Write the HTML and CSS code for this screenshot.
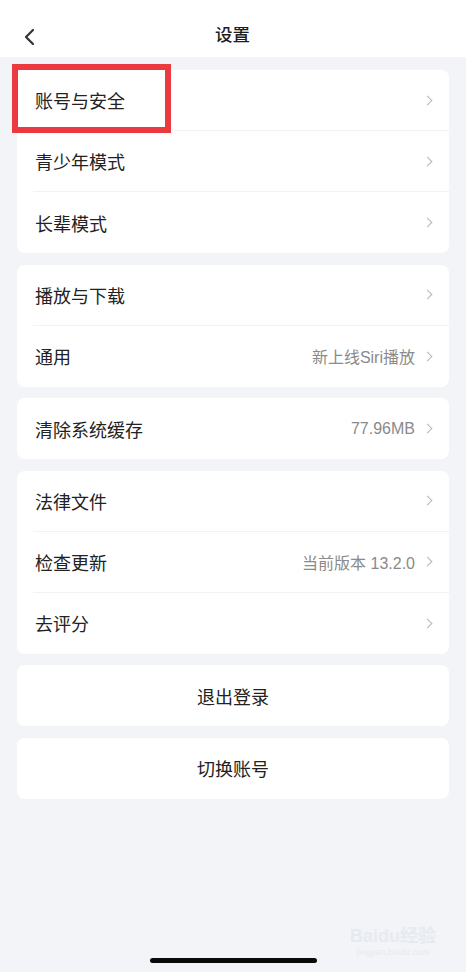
FILE: index.html
```html
<!DOCTYPE html>
<html lang="zh">
<head>
<meta charset="utf-8">
<title>设置</title>
<link rel="stylesheet" href="styles.css">
</head>
<body>
<div class="app">
  <header class="header">
    <svg class="back" width="12" height="18" viewBox="0 0 12 18"><path d="M10 2 L3 9 L10 16" fill="none" stroke="#333" stroke-width="2.2" stroke-linecap="round" stroke-linejoin="round"/></svg>
    <h1 class="title">设置</h1>
  </header>
  <main class="content">
    <section class="card">
      <div class="highlight"></div>
      <div class="row"><span class="label">账号与安全</span><span class="right"><i class="chev"></i></span></div>
      <div class="row"><span class="label">青少年模式</span><span class="right"><i class="chev"></i></span></div>
      <div class="row"><span class="label">长辈模式</span><span class="right"><i class="chev"></i></span></div>
    </section>
    <section class="card">
      <div class="row"><span class="label">播放与下载</span><span class="right"><i class="chev"></i></span></div>
      <div class="row"><span class="label">通用</span><span class="right"><span class="value">新上线Siri播放</span><i class="chev"></i></span></div>
    </section>
    <section class="card">
      <div class="row"><span class="label">清除系统缓存</span><span class="right"><span class="value">77.96MB</span><i class="chev"></i></span></div>
    </section>
    <section class="card">
      <div class="row"><span class="label">法律文件</span><span class="right"><i class="chev"></i></span></div>
      <div class="row"><span class="label">检查更新</span><span class="right"><span class="value">当前版本 13.2.0</span><i class="chev"></i></span></div>
      <div class="row"><span class="label">去评分</span><span class="right"><i class="chev"></i></span></div>
    </section>
    <button class="card btn">退出登录</button>
    <button class="card btn">切换账号</button>
  </main>
  <div class="watermark"><span class="wm-big">Bai<b>du</b>经验</span><span class="wm-small">jingyan.baidu.com</span></div>
  <div class="home"></div>
</div>
</body>
</html>
```
FILE: styles.css
```css
* { box-sizing: border-box; }
html, body { margin: 0; padding: 0; background: #fff; }
body {
  font-family: "Liberation Sans", "Noto Sans CJK SC", sans-serif;
  color: #222;
}
.app {
  position: relative;
  width: 466px;
  height: 972px;
  background: #f2f4f8;
  overflow: hidden;
}
.header {
  height: 57px;
  background: #fff;
  display: flex;
  align-items: center;
  justify-content: center;
  position: relative;
  padding-top: 13px;
}
.back {
  position: absolute;
  left: 23px;
  top: 28px;
}
.title {
  margin: 0;
  font-size: 17.5px;
  font-weight: 500;
  color: #1e1e1e;
  line-height: 22px;
  padding-right: 1px;
}
.content {
  padding: 13px 17px 0;
  display: flex;
  flex-direction: column;
  gap: 11.5px;
}
.card {
  position: relative;
  background: #fff;
  border-radius: 8px;
  padding-left: 16px;
}
.row {
  height: 61px;
  display: flex;
  align-items: center;
  justify-content: space-between;
  padding-right: 16px;
  padding-left: 2px;
  border-bottom: 1px solid #f1f2f4;
}
.row:last-child { border-bottom: none; }
.label {
  font-size: 18px;
  color: #222;
}
.right {
  display: flex;
  align-items: center;
  gap: 9px;
}
.value {
  font-size: 16px;
  color: #8a8a8a;
}
.chev {
  display: block;
  width: 7px;
  height: 7px;
  border-top: 1.2px solid #b5b5b5;
  border-right: 1.2px solid #b5b5b5;
  transform: rotate(45deg);
  margin-right: 2px;
}
.btn {
  height: 61px;
  border: none;
  padding: 0;
  font-family: inherit;
  font-size: 18px;
  color: #222;
  text-align: center;
}
.highlight {
  position: absolute;
  left: -5px;
  top: -6px;
  width: 159px;
  height: 69px;
  border: 6px solid #ea3a3f;
  z-index: 2;
}
.home {
  position: absolute;
  left: 150px;
  top: 958px;
  width: 167px;
  height: 5px;
  border-radius: 3px;
  background: #0a0a0a;
}
.watermark {
  position: absolute;
  left: 350px;
  top: 926px;
  display: flex;
  flex-direction: column;
  align-items: center;
  color: #e7eaef;
}
.wm-big { font-size: 18px; font-weight: 700; line-height: 20px; }
.wm-big b { font-weight: 700; }
.wm-small { font-size: 9px; line-height: 12px; }
```
